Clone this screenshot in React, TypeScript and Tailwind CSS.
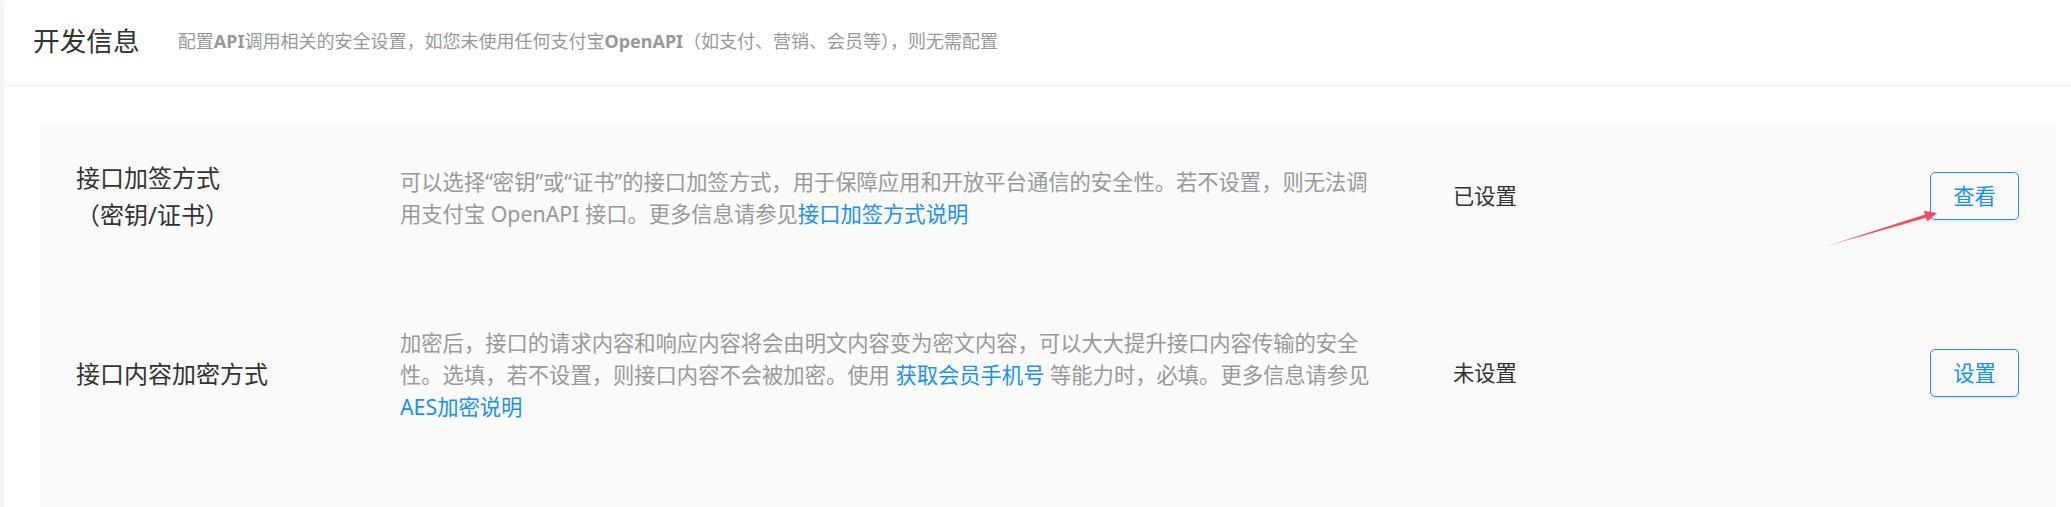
const FONT = "font-['Noto_Sans','Noto_Sans_CJK_SC',sans-serif]";

const ROWS = [
  {
    key: "sign",
    label: ["接口加签方式", "（密钥/证书）"],
    status: "已设置",
    action: "查看",
    height: "h-[148px]",
  },
  {
    key: "encrypt",
    label: ["接口内容加密方式"],
    status: "未设置",
    action: "设置",
    height: "h-[206px]",
  },
];

function Link({ children }: { children: React.ReactNode }) {
  return <a className="text-[#1890ff] cursor-pointer">{children}</a>;
}

function Description({ rowKey }: { rowKey: string }) {
  if (rowKey === "sign") {
    return (
      <p className="text-[21.3px] leading-[32px] text-[#999] whitespace-nowrap">
        可以选择“密钥”或“证书”的接口加签方式，用于保障应用和开放平台通信的安全性。若不设置，则无法调
        <br />
        用支付宝 OpenAPI 接口。更多信息请参见<Link>接口加签方式说明</Link>
      </p>
    );
  }
  return (
    <p className="text-[21.3px] leading-[32px] text-[#999] whitespace-nowrap">
      加密后，接口的请求内容和响应内容将会由明文内容变为密文内容，可以大大提升接口内容传输的安全
      <br />
      性。选填，若不设置，则接口内容不会被加密。使用 <Link>获取会员手机号</Link> 等能力时，必填。更多信息请参见
      <br />
      <Link>AES加密说明</Link>
    </p>
  );
}

function Arrow() {
  return (
    <svg
      className="absolute left-[1810px] top-[200px]"
      width="140"
      height="60"
      viewBox="0 0 140 60"
    >
      <defs>
        <linearGradient id="arrowFade" x1="10" y1="48" x2="126" y2="13" gradientUnits="userSpaceOnUse">
          <stop offset="0" stopColor="#f4485c" stopOpacity="0.15" />
          <stop offset="0.35" stopColor="#f4485c" stopOpacity="0.9" />
          <stop offset="1" stopColor="#f4485c" />
        </linearGradient>
      </defs>
      <polygon
        points="10,48 115.1,14.6 113.6,10.8 127,13 117.4,21.6 115.9,17.8"
        fill="url(#arrowFade)"
      />
    </svg>
  );
}

export default function App() {
  return (
    <div className={`relative flex min-h-[507px] bg-[#f5f5f5] ${FONT}`}>
      <div className="ml-[4px] flex-1 bg-white rounded-tl-[5px] pl-[36px] pr-[15px]">
        <header className="-ml-[36px] -mr-[15px] h-[86px] border-b border-[#ececec] flex items-center pl-[29px] pb-[3px]">
          <h1 className="text-[26.7px] text-[#333] font-normal">开发信息</h1>
          <span className="ml-[38px] text-[18px] text-[#999]">
            配置<b className="font-bold">API</b>调用相关的安全设置，如您未使用任何支付宝<b className="font-bold">OpenAPI</b>（如支付、营销、会员等），则无需配置
          </span>
        </header>
        <div className="mt-[36px] bg-[#fafafa] min-h-[400px] pl-[36px] pr-[37px]">
          {ROWS.map((row) => (
            <div key={row.key} className={`flex items-center ${row.height}`}>
              <div className="w-[324px] text-[24px] leading-[37px] text-[#333]">
                {row.label.map((line) => (
                  <div key={line}>{line}</div>
                ))}
              </div>
              <div className="w-[1053px] pt-[3px]">
                <Description rowKey={row.key} />
              </div>
              <div className="flex-1 text-[21.3px] text-[#333]">{row.status}</div>
              <button className="w-[89px] h-[48px] rounded-[5px] border border-[#1890ff] text-[#1890ff] text-[21.3px] shadow-[0_2px_0_rgba(0,0,0,0.04)]">
                {row.action}
              </button>
            </div>
          ))}
        </div>
      </div>
      <Arrow />
    </div>
  );
}
